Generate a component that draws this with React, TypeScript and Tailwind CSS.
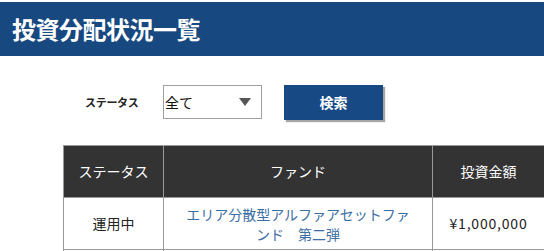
import React from 'react';

const font = { fontFamily: '"Noto Sans CJK JP", "Noto Sans", sans-serif' };

export default function App() {
  return (
    <div className="w-[544px] h-[251px] overflow-hidden bg-white" style={font}>
      {/* Page title */}
      <div className="mt-[2px] h-[54px] bg-[#17487f] flex items-center pl-[12px]">
        <h1 className="text-white text-[24px] font-bold leading-none tracking-[-0.5px]">投資分配状況一覧</h1>
      </div>

      {/* Filter */}
      <div className="flex items-center mt-[28px] h-[36px]">
        <span className="ml-[85px] w-[78px] text-[11px] font-bold text-[#222] tracking-[-0.3px]">ステータス</span>
        <div className="w-[99px] h-[34px] border border-[#a0a0a0] flex items-center justify-between pl-[1px] pr-[10px]">
          <span className="text-[14px] text-[#111]">全て</span>
          <svg width="12" height="8" viewBox="0 0 12 8">
            <polygon points="0,0 12,0 6,8" fill="#555" />
          </svg>
        </div>
        <button className="ml-[22px] w-[99px] h-[35px] bg-[#174a85] text-white text-[14px] font-bold shadow-[2px_2px_1px_rgba(0,0,0,0.35)]">
          検索
        </button>
      </div>

      {/* Table */}
      <table className="ml-[63px] mt-[25px] w-[481px] border-collapse table-fixed">
        <colgroup>
          <col className="w-[100px]" />
          <col className="w-[269px]" />
          <col className="w-[112px]" />
        </colgroup>
        <thead>
          <tr className="h-[52px] bg-[#333333] text-white text-[14px]">
            <th className="font-normal border border-[#999]">ステータス</th>
            <th className="font-normal border border-[#999]">ファンド</th>
            <th className="font-normal border border-[#999]">投資金額</th>
          </tr>
        </thead>
        <tbody>
          <tr className="h-[52px] text-[14px] text-[#222]">
            <td className="text-center border border-[#999]">運用中</td>
            <td className="text-center border border-[#999] px-[16px] leading-[20px] text-[#3b6ea5]">
              <span className="block whitespace-nowrap">エリア分散型アルファアセットファ</span>
              <span className="block whitespace-nowrap">ンド　第二弾</span>
            </td>
            <td className="text-center border border-[#999] tracking-[0.8px]">¥1,000,000</td>
          </tr>
          <tr className="h-[40px]">
            <td className="border border-[#999]"></td>
            <td className="border border-[#999]"></td>
            <td className="border border-[#999]"></td>
          </tr>
        </tbody>
      </table>
    </div>
  );
}
